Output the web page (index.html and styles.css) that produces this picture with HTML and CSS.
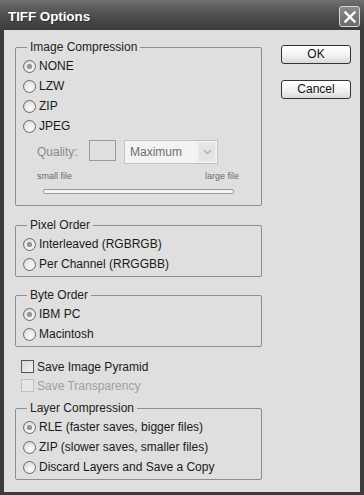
FILE: index.html
```html
<!DOCTYPE html>
<html>
<head>
<meta charset="utf-8">
<link rel="stylesheet" href="styles.css">
</head>
<body>
<div class="window">
  <div class="titlebar">
    <span class="title">TIFF Options</span>
    <span class="close"><svg width="12" height="12" viewBox="0 0 12 12"><path d="M1.5 1.5 L10.5 10.5 M10.5 1.5 L1.5 10.5" stroke="#fff" stroke-width="2.4" stroke-linecap="square"/></svg></span>
  </div>
  <div class="client">
    <div class="left">
      <fieldset class="group g1">
        <legend>Image Compression</legend>
        <div class="row"><span class="radio on"></span>NONE</div>
        <div class="row"><span class="radio"></span>LZW</div>
        <div class="row"><span class="radio"></span>ZIP</div>
        <div class="row"><span class="radio"></span>JPEG</div>
        <div class="quality">
          <span class="qlabel">Quality:</span>
          <span class="qbox"></span>
          <span class="select"><span class="seltext">Maximum</span><span class="selarrow"><svg width="9" height="6" viewBox="0 0 9 6"><path d="M1 1 L4.5 4.5 L8 1" fill="none" stroke="#b5b5b5" stroke-width="1.6"/></svg></span></span>
        </div>
        <div class="sizes"><span>small file</span><span>large file</span></div>
        <div class="track"></div>
      </fieldset>
      <fieldset class="group g2">
        <legend>Pixel Order</legend>
        <div class="row"><span class="radio on"></span>Interleaved (RGBRGB)</div>
        <div class="row"><span class="radio"></span>Per Channel (RRGGBB)</div>
      </fieldset>
      <fieldset class="group g3">
        <legend>Byte Order</legend>
        <div class="row"><span class="radio on"></span>IBM PC</div>
        <div class="row"><span class="radio"></span>Macintosh</div>
      </fieldset>
      <div class="checks">
        <div class="crow"><span class="check"></span>Save Image Pyramid</div>
        <div class="crow disabled"><span class="check"></span>Save Transparency</div>
      </div>
      <fieldset class="group g4">
        <legend>Layer Compression</legend>
        <div class="row"><span class="radio on"></span>RLE (faster saves, bigger files)</div>
        <div class="row"><span class="radio"></span>ZIP (slower saves, smaller files)</div>
        <div class="row"><span class="radio"></span>Discard Layers and Save a Copy</div>
      </fieldset>
    </div>
    <div class="right">
      <div class="btn">OK</div>
      <div class="btn">Cancel</div>
    </div>
  </div>
</div>
</body>
</html>
```
FILE: styles.css
```css
html, body { margin: 0; padding: 0; }
body { width: 364px; height: 495px; overflow: hidden; background: #3a3a3a; font-family: "Liberation Sans", Arial, sans-serif; }
.window { width: 364px; height: 495px; display: flex; flex-direction: column; background: #3c3c3c; box-sizing: border-box; }
.titlebar { height: 30px; flex: none; display: flex; align-items: center; justify-content: space-between; padding: 0 4px 0 8px; background: linear-gradient(#707070 0%, #5a5a5a 30%, #464646 70%, #3c3c3c 100%); }
.title { color: #fff; font-weight: bold; font-size: 13.5px; letter-spacing: -0.1px; text-shadow: 1px 1px 0 #2a2a2a; margin-top: 2px; }
.close { width: 19px; height: 19px; border: 1px solid #d8d8d8; border-radius: 3px; background: linear-gradient(#8a8a8a, #6a6a6a); display: flex; align-items: center; justify-content: center; margin-top: 3px; }
.client { flex: 1; margin: 0 4px 3px 4px; background: #dfdfdf; display: flex; padding: 10px 0 0 11px; }
.left { width: 247px; display: flex; flex-direction: column; }
.group { margin: 0; padding: 0 0 0 7px; border: 1px solid #8e8e8e; border-radius: 2px; font-size: 12px; color: #1a1a1a; }
.group legend { margin-left: 4px; padding: 0 3px; font-size: 12px; line-height: 14px; color: #222; }
.row { height: 20px; display: flex; align-items: center; }
.g1 .row:first-of-type, .g2 .row:first-of-type, .g3 .row:first-of-type, .g4 .row:first-of-type { margin-top: 2px; }
.radio { width: 11px; height: 11px; border: 1px solid #6a6a6a; border-radius: 50%; background: radial-gradient(circle at 60% 65%, #fafafa 0%, #eaeaea 50%, #c8c8c8 100%); margin-right: 3px; position: relative; flex: none; }
.radio.on::after { content: ""; position: absolute; left: 3px; top: 3px; width: 5px; height: 5px; border-radius: 50%; background: radial-gradient(circle at 50% 50%, #a8a8a8 0%, #7a7a7a 80%); }
.quality { display: flex; align-items: center; height: 23px; margin-top: 4px; padding-left: 14px; }
.qlabel { color: #8a8a8a; font-size: 12px; width: 52px; }
.qbox { width: 25px; height: 19px; border: 1px solid #9a9a9a; margin-right: 8px; margin-top: -3px; }
.select { border: 1px solid #c4c4c4; background: #f3f3f3; display: flex; box-sizing: border-box; width: 94px; height: 24px; }
.seltext { flex: 1; color: #6e6e6e; padding-left: 5px; line-height: 22px; font-size: 12px; }
.selarrow { width: 16px; margin: 1px; background: #e4e4e4; border: 1px solid #ececec; display: flex; align-items: center; justify-content: center; }
.sizes { display: flex; justify-content: space-between; width: 202px; margin-left: 14px; margin-top: 7px; font-size: 9px; line-height: 12px; color: #6a6a6a; }
.track { width: 189px; height: 3px; border: 1px solid #9a9a9a; border-radius: 2px; background: #f4f4f4; margin: 7px 0 11px 20px; }
.g2 { margin-top: 12px; }
.g3 { margin-top: 11px; }
.g2 .row:last-child, .g3 .row:last-child { margin-bottom: 2px; }
.checks { padding: 10px 0 0 6px; font-size: 12px; }
.crow { height: 19px; display: flex; align-items: center; color: #1a1a1a; }
.check { width: 11px; height: 11px; border: 1px solid #555; background: linear-gradient(135deg, #d6d6d6, #f4f4f4); margin-right: 3px; flex: none; }
.crow.disabled { color: #a0a0a0; }
.crow.disabled .check { border-color: #c0c0c0; background: #e6e6e6; }
.g4 { margin-top: 6px; }
.g4 .row:last-child { margin-bottom: 2px; }
.right { display: flex; flex-direction: column; padding: 5px 0 0 19px; }
.btn { width: 68px; height: 17px; border: 1px solid #333; border-radius: 3px; background: linear-gradient(#ffffff, #f0f0f0 60%, #d8d8d8); font-size: 12px; line-height: 17px; text-align: center; color: #111; margin-bottom: 16px; }
```
